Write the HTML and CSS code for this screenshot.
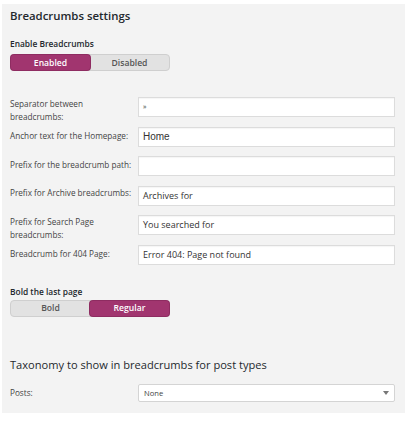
FILE: index.html
```html
<!DOCTYPE html>
<html>
<head>
<meta charset="utf-8">
<link rel="stylesheet" href="styles.css">
</head>
<body>
<div class="panel">
  <h2 class="title">Breadcrumbs settings</h2>
  <div class="field-label">Enable Breadcrumbs</div>
  <div class="toggle">
    <span class="opt active">Enabled</span>
    <span class="opt">Disabled</span>
  </div>

  <div class="rows">
    <div class="row">
      <label class="lbl">Separator between<br>breadcrumbs:</label>
      <div class="input sep">»</div>
    </div>
    <div class="row">
      <label class="lbl lbl-mid">Anchor text for the Homepage:</label>
      <div class="input home">Home</div>
    </div>
    <div class="row">
      <label class="lbl lbl-mid">Prefix for the breadcrumb path:</label>
      <div class="input"></div>
    </div>
    <div class="row">
      <label class="lbl">Prefix for Archive breadcrumbs:</label>
      <div class="input">Archives for</div>
    </div>
    <div class="row">
      <label class="lbl">Prefix for Search Page<br>breadcrumbs:</label>
      <div class="input">You searched for</div>
    </div>
    <div class="row">
      <label class="lbl lbl-mid">Breadcrumb for 404 Page:</label>
      <div class="input">Error 404: Page not found</div>
    </div>
  </div>

  <div class="field-label bold-label">Bold the last page</div>
  <div class="toggle toggle2">
    <span class="opt">Bold</span>
    <span class="opt active">Regular</span>
  </div>

  <h3 class="subtitle">Taxonomy to show in breadcrumbs for post types</h3>
  <div class="row select-row">
    <label class="lbl">Posts:</label>
    <div class="select">
      <span>None</span>
      <svg class="arrow" width="6" height="4" viewBox="0 0 6 4"><path d="M0 0H6L3 4Z" fill="#777"/></svg>
    </div>
  </div>
</div>
</body>
</html>
```

FILE: styles.css
```css
html, body {
  margin: 0;
  padding: 0;
  background: #fff;
}
body {
  font-family: "Open Sans", "Liberation Sans", sans-serif;
  color: #333;
}
.panel {
  margin: 4px 5px 0 2px;
  background: #f3f3f3;
  padding: 3px 10px 11px 8px;
}
.title {
  margin: 0;
  font-size: 11.4px;
  line-height: 18px;
  font-weight: 600;
  color: #23282d;
}
.field-label {
  margin-top: 13px;
  font-size: 8.4px;
  line-height: 12px;
  font-weight: 600;
  color: #23282d;
}
.toggle {
  margin-top: 4px;
  width: 158px;
  height: 15px;
  display: flex;
  background: #e2e2e2;
  border: 1px solid #cfcfcf;
  border-radius: 4px;
  font-size: 8.6px;
  font-weight: 600;
}
.opt {
  flex: 1;
  display: flex;
  align-items: center;
  justify-content: center;
  color: #555;
}
.opt.active {
  background: #a1356f;
  color: #fff;
  border-radius: 3px;
  box-shadow: 0 0 0 1px #8e2c61;
}
.rows {
  margin-top: 26px;
  display: flex;
  flex-direction: column;
  gap: 9.6px;
}
.row {
  display: flex;
  align-items: flex-start;
  height: 20px;
}
.lbl {
  width: 128px;
  flex: none;
  font-size: 8.2px;
  line-height: 13px;
  white-space: nowrap;
  color: #444;
}
.lbl-mid {
  padding-top: 2px;
}
.input {
  width: 257px;
  height: 20px;
  box-sizing: border-box;
  background: #fff;
  border: 1px solid #dcdcdc;
  box-shadow: inset 0 1px 1px rgba(0,0,0,0.04);
  font-size: 9px;
  line-height: 18px;
  padding-left: 4px;
  color: #333;
}
.input.sep {
  font-size: 7px;
}
.input.home {
  font-family: "Liberation Sans", Arial, sans-serif;
  font-size: 10px;
}
.bold-label {
  margin-top: 21px;
}
.toggle2 {
  margin-top: 2px;
}
.subtitle {
  margin: 40px 0 0;
  font-size: 11.1px;
  line-height: 16px;
  font-weight: 400;
  color: #23282d;
}
.select-row {
  margin-top: 11px;
  align-items: center;
  height: 18px;
}
.select {
  width: 257px;
  height: 18px;
  box-sizing: border-box;
  background: #fff;
  border: 1px solid #d4d4d4;
  border-radius: 2px;
  display: flex;
  align-items: center;
  justify-content: space-between;
  padding: 0 5px 0 5px;
  font-size: 7.6px;
  color: #444;
}
.arrow {
  display: block;
}
```
